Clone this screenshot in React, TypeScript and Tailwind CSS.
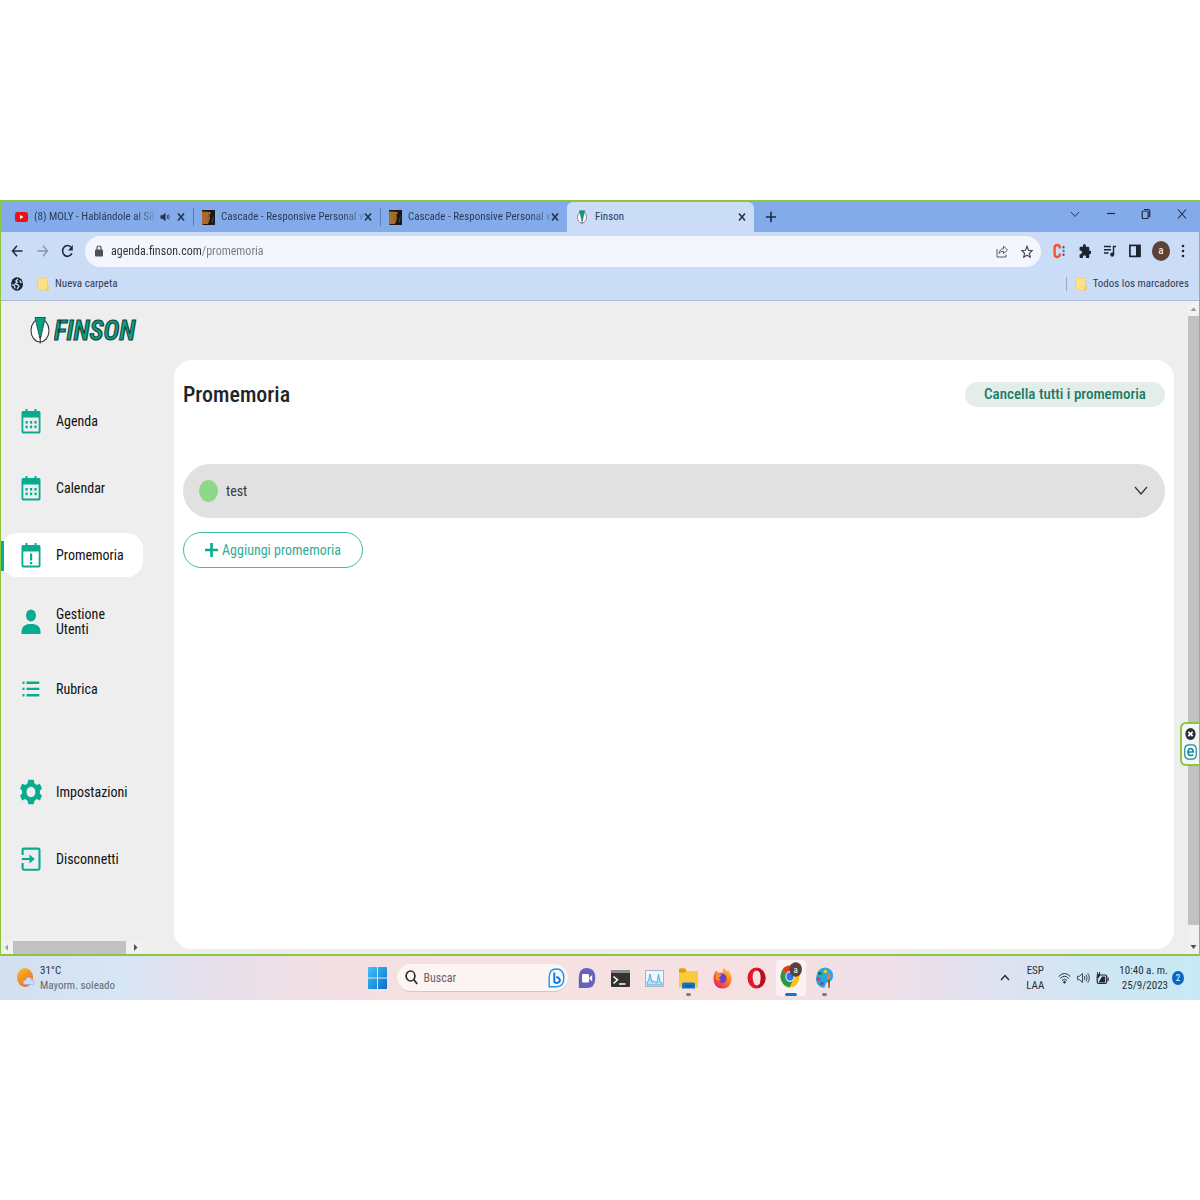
import type { ReactNode } from "react";

const GREEN = "#06ab90";

function CalendarIcon({ alert = false }: { alert?: boolean }) {
  return (
    <svg className="h-[26px] w-5 shrink-0" viewBox="0 0 20 26" aria-hidden="true">
      <rect x="4.500" y="1" width="2" height="5" fill={GREEN} />
      <rect x="13.500" y="1" width="2" height="5" fill={GREEN} />
      <path fillRule="evenodd" fill={GREEN} d="M2 3h16q1.500 0 1.500 2v18.500q0 2-1.500 2H2q-1.500 0-1.500-2V5Q.5 3 2 3zM2.300 9.500V23.600h15.400V9.500z" />
      {alert ? (
        <g fill={GREEN}>
          <rect x="9" y="11.500" width="2.200" height="7" />
          <rect x="9" y="20" width="2.200" height="2.300" />
        </g>
      ) : (
        <g fill={GREEN}>
          <rect x="4.500" y="13" width="2.200" height="2.600" />
          <rect x="9" y="13" width="2.200" height="2.600" />
          <rect x="13.400" y="13" width="2.200" height="2.600" />
          <rect x="4.500" y="17.600" width="2.200" height="2.600" />
          <rect x="9" y="17.600" width="2.200" height="2.600" />
          <rect x="13.400" y="17.600" width="2.200" height="2.600" />
        </g>
      )}
    </svg>
  );
}

const UserIcon = () => (
  <svg className="h-[26px] w-5 shrink-0" viewBox="0 0 20 26" fill={GREEN} aria-hidden="true">
    <ellipse cx="10" cy="6.500" rx="5" ry="6" />
    <path d="M.5 25v-2C.5 17.500 4 15 10 15s9.500 2.500 9.500 8v2z" />
  </svg>
);

const ListIcon = () => (
  <svg className="h-[26px] w-5 shrink-0" viewBox="0 0 20 26" fill={GREEN} aria-hidden="true">
    <path d="M1.500 5.500h2v2.400h-2zM5.500 5.500h12.800v2.400H5.500zM1.500 11.700h2v2.400h-2zM5.500 11.700h12.800v2.400H5.500zM1.500 18h2v2.400h-2zM5.500 18h12.800v2.400H5.500z" />
  </svg>
);

const GearIcon = () => (
  <svg className="-mx-px h-[26px] w-[22px] shrink-0" viewBox="0 0 22 26" aria-hidden="true">
    <path
      fillRule="evenodd"
      fill={GREEN}
      d="M8.300.8h5.400l.8 3.700 2.300 1.600 3.100-1.300 2 4.700-2 2.300v2.600l2 2.300-2 4.700-3.100-1.300-2.300 1.600-.8 3.600H8.300l-.8-3.600-2.300-1.600-3.100 1.300-2-4.700 2-2.300v-2.600l-2-2.300 2-4.700 3.100 1.300 2.300-1.600zM11 7.800c-2.500 0-4.400 2.300-4.400 5.200s1.900 5.200 4.400 5.200 4.400-2.300 4.400-5.200-1.900-5.200-4.400-5.200z"
    />
  </svg>
);

const ExitIcon = () => (
  <svg className="h-[26px] w-5 shrink-0" viewBox="0 0 20 26" fill="none" stroke={GREEN} strokeWidth="2.100" aria-hidden="true">
    <path d="M1.600 9V4q0-1.400 1.200-1.400h14.500q1.200 0 1.200 1.400v18.300q0 1.400-1.200 1.400H2.800q-1.200 0-1.200-1.400V17" />
    <path d="M.8 13h11" />
    <path d="M8.500 8.600 13.800 13l-5.300 4.400z" fill={GREEN} stroke="none" />
  </svg>
);

function FinsonMark({ className }: { className: string }) {
  return (
    <svg className={className} viewBox="0 0 20 28" aria-hidden="true">
      <ellipse cx="10" cy="14.500" rx="9" ry="11.500" fill="#fff" stroke="#3a3a3a" strokeWidth="1.100" />
      <path d="M5 1.500h10.500l-1 3.500L10.600 22H9.800L5.800 5z" fill="#04a183" stroke="#1e4f45" strokeWidth=".9" />
      <path d="M10.200 20v7.500" stroke="#222" strokeWidth="1" />
    </svg>
  );
}

const CloseIcon = () => (
  <svg className="h-2.5 w-2" viewBox="0 0 8 10" stroke="#25324a" strokeWidth="1.600" aria-hidden="true">
    <path d="m1 1.500 6 7M7 1.500l-6 7" />
  </svg>
);

const Folder = () => (
  <svg className="h-3.5 w-3 shrink-0" viewBox="0 0 12 14" aria-hidden="true">
    <path d="M1 1h8.500q1 0 1 1v6l1 1v4H2q-1.500 0-1.500-1.500V1z" fill="#ffe08a" stroke="#f0c95b" strokeWidth=".7" />
    <path d="M9 9.500h2.500V13H9z" fill="#f5cd5c" />
  </svg>
);

const CascadeIcon = () => (
  <svg className="h-[15px] w-[13px] shrink-0" viewBox="0 0 13 15" aria-hidden="true">
    <path fill="#1b1714" d="M0 0h13v15H0z" />
    <path fill="#a86d2c" d="M0 1.500 8.500 2v2l-1 1 .5 4-2 5H1.500L0 15z" />
    <path d="M6 4.500h2M5.500 7h2M5 9.500h2" stroke="#6b4018" strokeWidth=".8" />
    <path fill="#45474b" d="m9.500 12 2-7v4l-1 4z" />
  </svg>
);

function Tab({ icon, title, sound = false, wide = false }: { icon: ReactNode; title: string; sound?: boolean; wide?: boolean }) {
  return (
    <div className={`flex shrink-0 items-center ${wide ? "w-[192px] pl-3.5" : "w-[186px] pl-2"}`}>
      <button className="flex min-w-0 flex-1 items-center gap-1.5 text-left">
        {icon}
        <span className="whitespace-nowrap [mask-image:linear-gradient(to_right,black_85%,transparent_105%)]">{title}</span>
        {sound && (
          <svg className="ml-auto h-2.5 w-2.5 shrink-0" viewBox="0 0 10 10" fill="#25324a" aria-hidden="true">
            <path d="M.5 3.300h2L5.500.8v8.400l-3-2.500h-2z" />
            <path d="M7 3q1.200 2 0 4M8.500 2.500q1.600 2.500 0 5" fill="none" stroke="#25324a" strokeWidth=".8" />
          </svg>
        )}
      </button>
      <button className={`mr-1 flex h-4 w-4 items-center justify-center ${sound ? "ml-1.5" : ""}`} aria-label="Chiudi scheda"><CloseIcon /></button>
    </div>
  );
}

function TabStrip() {
  return (
    <div className="flex h-[30px] items-stretch bg-[#84abe9] text-[11px] text-[#2b3b57]">
      <Tab
        wide
        sound
        title="(8) MOLY - Hablándole al Sil"
        icon={
          <svg className="h-2.5 w-[13px] shrink-0" viewBox="0 0 13 10" aria-hidden="true">
            <rect width="13" height="10" rx="2.500" fill="#f20d1b" />
            <path d="m5 3 3.500 2L5 7z" fill="#fff" />
          </svg>
        }
      />
      <div className="my-1.5 w-px bg-[#5a7bb3]" />
      <Tab title="Cascade - Responsive Personal v" icon={<CascadeIcon />} />
      <div className="my-1.5 w-px bg-[#5a7bb3]" />
      <Tab title="Cascade - Responsive Personal v" icon={<CascadeIcon />} />
      <div className="flex w-[187px] items-center rounded-t-md bg-[#cbdcf6] pl-2.5">
        <button className="flex flex-1 items-center gap-2 text-left">
          <FinsonMark className="h-[14px] w-2.5" />
          Finson
        </button>
        <button className="mr-1 flex h-4 w-4 items-center justify-center" aria-label="Chiudi scheda"><CloseIcon /></button>
      </div>
      <button className="ml-3 flex items-center" aria-label="Nuova scheda">
        <svg className="h-3 w-2.5" viewBox="0 0 10 12" stroke="#1d2a42" strokeWidth="1.600" aria-hidden="true"><path d="M5 .8v10.400M0 6h10" /></svg>
      </button>
      <div className="ml-auto flex w-[129px] items-center justify-between pr-3 pb-1.5">
        <button aria-label="Cerca schede"><svg className="h-3 w-2.5" viewBox="0 0 10 12" fill="none" stroke="#24385f" aria-hidden="true"><path d="m1 4 4 4.500L9 4" /></svg></button>
        <button aria-label="Riduci"><svg className="h-3 w-2.5" viewBox="0 0 10 12" stroke="#1d2a42" strokeWidth="1.200" aria-hidden="true"><path d="M1 5.500h8" /></svg></button>
        <button aria-label="Ripristina"><svg className="h-3 w-2.5" viewBox="0 0 10 12" fill="none" stroke="#1d2a42" strokeWidth="1.200" aria-hidden="true"><rect x="1.200" y="3" width="6" height="7.500" rx="1" /><path d="M3 1.500h4.300q1.500 0 1.500 1.500v6" /></svg></button>
        <button aria-label="Chiudi"><svg className="h-3 w-2.5" viewBox="0 0 10 12" stroke="#1d2a42" strokeWidth="1.100" aria-hidden="true"><path d="m1 1.500 8 9M9 1.500l-8 9" /></svg></button>
      </div>
    </div>
  );
}

function Toolbar() {
  return (
    <div className="flex h-9 items-center bg-[#cbdcf6] pt-0.5 pr-3.5 pl-2.5">
      <button aria-label="Indietro"><svg className="h-3.5 w-3" viewBox="0 0 12 14" fill="none" stroke="#202a3b" strokeWidth="1.500" aria-hidden="true"><path d="M11.500 7H1.500M6 1.800 1.500 7 6 12.200" /></svg></button>
      <button className="ml-3.5" aria-label="Avanti"><svg className="h-3.5 w-3" viewBox="0 0 12 14" fill="none" stroke="#8392ab" strokeWidth="1.300" aria-hidden="true"><path d="M.5 7h10M6 1.800 10.500 7 6 12.200" /></svg></button>
      <button className="ml-3" aria-label="Ricarica"><svg className="h-3.5 w-[13px]" viewBox="0 0 13 14" fill="none" stroke="#202a3b" strokeWidth="1.600" aria-hidden="true"><path d="M10.800 9.200A4.800 5.400 0 1 1 10 3.300" /><path d="M11.800 1v5.500H7z" fill="#202a3b" stroke="none" /></svg></button>
      <label className="ml-[11px] flex h-[31px] flex-1 items-center rounded-full bg-[#f3f7fd] pr-2 pl-2.5">
        <svg className="mr-2 h-3 w-2" viewBox="0 0 8 12" aria-hidden="true"><rect y="4.500" width="8" height="7" rx="1" fill="#4c525c" /><path d="M2 5V3q0-2 2-2t2 2v2" fill="none" stroke="#4c525c" strokeWidth="1.200" /></svg>
        <input
          aria-label="Indirizzo"
          defaultValue="agenda.finson.com/promemoria"
          className="min-w-0 flex-1 bg-[linear-gradient(to_right,#2b3038_91px,#737a86_91px)] bg-clip-text text-[12px] text-transparent outline-none"
        />
        <button aria-label="Condividi"><svg className="h-3.5 w-3" viewBox="0 0 12 14" fill="none" stroke="#565c66" aria-hidden="true"><path d="M1 5v8h9v-2.500M3 9.500q.5-4.500 4.500-4.800V2L11.500 6 7.500 9.500V7.300Q4.500 7 3 9.500z" /></svg></button>
        <button className="ml-[13px]" aria-label="Aggiungi ai preferiti"><svg className="h-[13px] w-3" viewBox="0 0 12 13" fill="none" stroke="#3c424d" strokeWidth="1.100" aria-hidden="true"><path d="m6 1.300 1.500 3.900 3.700.3-2.800 2.800.9 4L6 10.100l-3.300 2.200.9-4L.8 5.500l3.700-.3z" /></svg></button>
      </label>
      <div className="ml-3 flex items-center gap-[13px]">
        <button aria-label="Estensione C"><svg className="h-4 w-[13px]" viewBox="0 0 13 16" aria-hidden="true"><path d="M6.800 5.500V4.300Q6.500 2 4.300 2 1.600 2 1.600 5v6q0 3 2.700 3 2.200 0 2.500-2.300v-1.200" fill="none" stroke="#f4512c" strokeWidth="2.300" /><path d="M9.500 3h2v2.300h-2z" fill="#4c5768" /><path d="M9.500 6.800h2v2.300h-2z" fill="#2188e6" /><path d="M9.500 10.600h2v2.300h-2z" fill="#4c5768" /></svg></button>
        <button aria-label="Estensioni"><svg className="h-3.5 w-3" viewBox="1 1 21 21" preserveAspectRatio="none" fill="#1c2431" aria-hidden="true"><path d="M20.500 11H19V7c0-1.100-.9-2-2-2h-4V3.500a2.500 2.500 0 0 0-5 0V5H4c-1.100 0-2 .9-2 2v3.800h1.500a2.700 2.700 0 0 1 0 5.400H2V20c0 1.100.9 2 2 2h3.800v-1.500a2.700 2.700 0 0 1 5.400 0V22H17c1.100 0 2-.9 2-2v-4h1.500a2.500 2.500 0 0 0 0-5z" /></svg></button>
        <button aria-label="Controlli multimediali"><svg className="h-3 w-3" viewBox="0 0 12 12" stroke="#1c2431" strokeWidth="1.400" fill="none" aria-hidden="true"><path d="M0 1.500h7M0 4.800h7M0 8h4.500M9.500 9.500V1.500H12" /><ellipse cx="8.200" cy="9.600" rx="1.300" ry="1.500" fill="#1c2431" /></svg></button>
        <button aria-label="Pannello laterale"><svg className="h-3.5 w-3" viewBox="0 0 12 14" aria-hidden="true"><rect x=".9" y="1.400" width="10" height="11" fill="none" stroke="#1c2431" strokeWidth="1.700" /><path d="M7 1h4.500v12H7z" fill="#1c2431" /></svg></button>
        <button className="-mx-0.5 flex h-5 w-[18px] items-center justify-center rounded-[50%] bg-[#5d4037] text-[11px] text-white">a</button>
        <button aria-label="Menu"><svg className="h-3.5 w-1" viewBox="0 0 4 14" fill="#1c2431" aria-hidden="true"><circle cx="2" cy="2" r="1.300" /><circle cx="2" cy="7" r="1.300" /><circle cx="2" cy="12" r="1.300" /></svg></button>
      </div>
    </div>
  );
}

function BookmarkBar() {
  return (
    <div className="flex h-[33px] items-center border-b border-[#aebbd6] bg-[#cbdcf6] pr-2.5 pl-2.5 text-[11px] text-[#2e3b50]">
      <button aria-label="Sito"><svg className="h-3.5 w-3" viewBox="0 0 12 14" aria-hidden="true"><ellipse cx="6" cy="7" rx="6" ry="6.800" fill="#1c2431" /><path d="M7 2 4.800 4l1.500 1.300L4 7l3 .8 1 1.700L6 12M1 7.500 3.500 9l.5 2.500M8.500 3.500 10.500 6" fill="none" stroke="#cbdcf6" strokeWidth="1.300" /></svg></button>
      <button className="ml-3.5 flex items-center gap-1.5"><Folder />Nueva carpeta</button>
      <div className="ml-auto h-3.5 w-px bg-[#9aa9c5]" />
      <button className="ml-2 flex items-center gap-1.5"><Folder />Todos los marcadores</button>
    </div>
  );
}

function NavItem({ icon, label, active = false }: { icon: ReactNode; label: string; active?: boolean }) {
  return (
    <a href="#" aria-current={active ? "page" : undefined} className={`relative flex h-11 items-center gap-[15px] pl-5 text-[14px] leading-[15px] text-[#111] ${active ? "rounded-2xl bg-white" : ""}`}>
      {active && <span className="absolute top-2 left-0 h-[30px] w-[3px] bg-[#06ab90]" />}
      {icon}
      <span className="w-20">{label}</span>
    </a>
  );
}

function Sidebar() {
  return (
    <aside className="flex w-[173px] shrink-0 flex-col">
      <div className="flex h-[58px] items-center gap-1 pl-[29px]">
        <FinsonMark className="h-7 w-5" />
        <svg className="h-7 w-[84px]" viewBox="0 0 84 28" role="img" aria-label="Finson">
          <text x="0" y="24" fontFamily="Roboto Condensed, Roboto, sans-serif" fontSize="27" fontWeight="600" fontStyle="italic" fill="#05a386" stroke="#173f38" strokeWidth="1.100">FINSON</text>
        </svg>
      </div>
      <nav className="mt-10 mr-[31px] flex flex-1 flex-col gap-[23px]">
        <NavItem icon={<CalendarIcon />} label="Agenda" />
        <NavItem icon={<CalendarIcon />} label="Calendar" />
        <NavItem icon={<CalendarIcon alert />} label="Promemoria" active />
        <NavItem icon={<UserIcon />} label="Gestione Utenti" />
        <NavItem icon={<ListIcon />} label="Rubrica" />
        <div className="mt-9 flex flex-col gap-[23px]">
          <NavItem icon={<GearIcon />} label="Impostazioni" />
          <NavItem icon={<ExitIcon />} label="Disconnetti" />
        </div>
      </nav>
      <div className="mt-[60px] mr-[31px] flex h-[13px] items-stretch bg-[#f1f1f1]">
        <svg className="w-3" viewBox="0 0 12 13" aria-hidden="true"><path d="M7 3.500v6l-3-3z" fill="#9b9b9b" /></svg>
        <div className="w-[113px] bg-[#c1c1c1]" />
        <svg className="ml-[3px] w-3" viewBox="0 0 12 13" aria-hidden="true"><path d="M5 3v7l3.500-3.500z" fill="#505050" /></svg>
      </div>
    </aside>
  );
}

function Reminders() {
  return (
    <main className="mt-[59px] mr-3.5 mb-[5px] flex-1 rounded-[18px] bg-white px-[9px] pt-[22px]">
      <div className="flex items-start justify-between">
        <h1 className="text-[22px] leading-[26px] font-medium text-[#212529]">Promemoria</h1>
        <button className="h-[25px] w-[200px] rounded-full bg-[#e3eeeb] text-[15px] leading-[25px] font-medium text-[#1b7a64]">Cancella tutti i promemoria</button>
      </div>
      <button className="mt-[56px] flex h-[54px] w-full items-center rounded-full bg-[#e1e1e1] px-4 text-[14px] text-[#3a3a3a]" aria-expanded="false">
        <span className="mr-2 h-[22px] w-[19px] rounded-[50%] bg-[#8ed888]" />
        test
        <svg className="ml-auto h-3 w-4" viewBox="0 0 16 12" fill="none" stroke="#333" strokeWidth="1.200" aria-hidden="true"><path d="m2 2 6 7 6-7" /></svg>
      </button>
      <button className="mt-3.5 flex h-9 w-[180px] items-center justify-center gap-1 rounded-full border border-[#3dbba4] text-[14px] text-[#2fae95]">
        <svg className="h-3.5 w-[13px]" viewBox="0 0 13 14" stroke={GREEN} strokeWidth="2.600" aria-hidden="true"><path d="M6.500 0v14M0 7h13" /></svg>
        Aggiungi promemoria
      </button>
    </main>
  );
}

function ScrollRail() {
  return (
    <div className="relative flex w-[11px] shrink-0 flex-col bg-[#f1f1f1]">
      <svg className="h-[15px] w-full" viewBox="0 0 11 15" aria-hidden="true"><path d="M2.500 10h6l-3-3.500z" fill="#9b9b9b" /></svg>
      <div className="flex-1 bg-[#c1c1c1]" />
      <svg className="mt-3 h-[17px] w-full" viewBox="0 0 11 17" aria-hidden="true"><path d="M2.500 8h6l-3 4z" fill="#505050" /></svg>
      <div className="absolute top-[421px] right-0 flex h-11 w-[19px] flex-col items-center justify-center gap-1 rounded-l-md border-2 border-r-0 border-[#8cc63f] bg-[#f5f5f5]">
        <svg className="h-3 w-[11px] shrink-0" viewBox="0 0 12 14" aria-hidden="true"><ellipse cx="6" cy="7" rx="6" ry="7" fill="#26303a" /><path d="m3.500 4.500 5 5M8.500 4.500l-5 5" stroke="#fff" strokeWidth="2" /></svg>
        <svg className="h-4 w-[13px] shrink-0" viewBox="0 0 13 16" fill="none" stroke="#118a9a" aria-hidden="true"><rect x=".8" y=".8" width="11.400" height="14.400" rx="4" strokeWidth="1.200" fill="#fff" /><path d="M4 8h5.300Q9 4.500 6.600 4.500T4 8q0 3.500 2.800 3.500Q8.300 11.500 9.300 10.500" strokeWidth="1.600" /></svg>
      </div>
    </div>
  );
}

function TaskButton({ label, children, running = false, active = false }: { label: string; children: ReactNode; running?: boolean; active?: boolean }) {
  return (
    <button aria-label={label} className={`relative flex h-9 w-[30px] items-center justify-center rounded ${active ? "bg-[#fbf2f3]" : ""}`}>
      {children}
      {running && <span className="absolute bottom-0 h-[3px] w-[5px] rounded-full bg-[#85797c]" />}
      {active && <span className="absolute bottom-0 h-[3px] w-3 rounded-full bg-[#1677cf]" />}
    </button>
  );
}

function Taskbar() {
  return (
    <footer className="grid h-[44px] grid-cols-[1fr_auto_1fr] items-center bg-[linear-gradient(90deg,#d3dff0_0%,#d7e6f5_10%,#e6e0ec_17%,#f3dfe4_27%,#f6e2df_38%,#f5e1e2_62%,#efdfe8_74%,#dfe2f1_83%,#cde6f4_92%,#c7e9f5_100%)] text-[11px] text-[#2a2f36]">
      <button className="flex items-center gap-[5px] pl-4 text-left leading-[15px]">
        <svg className="h-[22px] w-[19px]" viewBox="0 0 19 22" aria-hidden="true">
          <defs><linearGradient id="sun" x2=".6" y2="1"><stop stopColor="#f8c22d" /><stop offset="1" stopColor="#ef6c17" /></linearGradient></defs>
          <ellipse cx="9" cy="10.500" rx="8" ry="9.500" fill="url(#sun)" />
          <path d="M9.500 17.500q-2.500 0-2.500-2 0-2.200 2.500-2.300Q10.300 10 13 10.200q2.500.2 3 3 2.500.3 2.500 2.300 0 2-2.500 2z" fill="#c9dcfa" stroke="#90b3ea" strokeWidth=".6" />
        </svg>
        <span>31°C<br /><span className="text-[#626a75]">Mayorm. soleado</span></span>
      </button>
      <div className="flex items-center pl-[7px]">
        <button aria-label="Inicio" className="mr-2.5">
          <svg className="h-[22px] w-[19px]" viewBox="0 0 19 22" aria-hidden="true">
            <defs><linearGradient id="win" x2="1" y2="1"><stop stopColor="#41c5f7" /><stop offset="1" stopColor="#0a6ccf" /></linearGradient></defs>
            <path fill="url(#win)" d="M.5 0h8.500v10.500H0V.5zM10 0h8.500l.5.500v10h-9zM0 11.500h9V22H.5L0 21.500zM10 11.500h9v10l-.5.500H10z" />
          </svg>
        </button>
        <label className="mr-1 flex h-7 w-[171px] items-center rounded-full border-b border-[#d6c5c5] bg-[#fcf5f4] pr-[3px] pl-2">
          <svg className="mr-1.5 h-[15px] w-[13px]" viewBox="0 0 13 15" fill="none" stroke="#2c2c2c" strokeWidth="1.700" aria-hidden="true"><ellipse cx="5.500" cy="6" rx="4.400" ry="5" /><path d="m8.700 9.600 3.500 4.500" /></svg>
          <input aria-label="Buscar" placeholder="Buscar" className="min-w-0 flex-1 text-[12px] outline-none placeholder:text-[#6a6463]" />
          <svg className="h-5 w-[17px]" viewBox="0 0 17 20" fill="none" aria-hidden="true"><path d="M1.200 18.700V9.500Q1.200 1 8.500 1t7.300 9q0 8.700-7.300 8.700z" stroke="#2292e4" strokeWidth="1.400" fill="#f4fbff" /><path d="M6.300 4.500v9.300q1.500 1.800 4 .7 2-1 1.500-3-.8-2-3.500-2.500" stroke="#1470dc" strokeWidth="1.900" /></svg>
        </label>
        <div className="flex items-center gap-1">
          <TaskButton label="Chat">
            <svg className="h-[22px] w-[18px]" viewBox="0 0 18 22" aria-hidden="true"><path d="M.8 21V10.500Q.8 1 9 1t8.300 10Q17.300 21 9 21z" fill="#6560c0" /><rect x="4" y="7" width="7" height="8.500" rx="1" fill="#fff" /><path d="m11.500 10.500 2.700-2.500v6.500l-2.700-2.500z" fill="#fff" /></svg>
          </TaskButton>
          <TaskButton label="Terminal">
            <svg className="h-[17px] w-[19px]" viewBox="0 0 19 17" aria-hidden="true"><rect width="19" height="17" rx="1" fill="#333" /><path d="M0 1q0-1 1-1h17q1 0 1 1v2H0z" fill="#8b8b8b" /><path d="m2.500 6.500 4 3.300-4 3.700M8 14h6.500" fill="none" stroke="#fff" strokeWidth="1.500" /></svg>
          </TaskButton>
          <TaskButton label="Monitor">
            <svg className="h-[17px] w-[19px]" viewBox="0 0 19 17" aria-hidden="true"><rect x=".5" y=".5" width="18" height="16" fill="#eff6fb" stroke="#a9b5be" /><path d="M2 15v-3l1.500-1L5 4l2 8 1.500-1 1.500 1 2 1 1.500-9 1.500 8 2 1v2z" fill="#b8e0f7" stroke="#55b0e4" strokeWidth="1" /></svg>
          </TaskButton>
          <TaskButton label="Explorador" running>
            <svg className="h-[21px] w-[19px]" viewBox="0 0 19 21" aria-hidden="true"><path d="M0 2q0-1.500 1-1.500h5L7.500 3H18q1 0 1 1v15.500H0z" fill="#fcc83c" /><path d="M0 2q0-1.500 1-1.500h5L7.500 3 6 4.500H0z" fill="#dd9b13" /><path d="M3 20.500V16q0-1.500 1.500-1.500h10q1.500 0 1.500 1.500v4.500z" fill="#1573c5" /><path d="M6 18h7" stroke="#0b4d90" strokeWidth="1.200" /></svg>
          </TaskButton>
          <TaskButton label="Firefox">
            <svg className="h-[22px] w-[19px]" viewBox="0 0 19 22" aria-hidden="true">
              <defs><linearGradient id="fox" x1="1" x2=".2" y2="1"><stop stopColor="#ffe13b" /><stop offset=".5" stopColor="#ff7a25" /><stop offset="1" stopColor="#ed1d68" /></linearGradient></defs>
              <path d="M11 .5q1 2.500 3 4l1-1.500q3.500 4 3.500 9Q18 21.500 9.500 21.500T.5 12.500Q.3 7 3.300 3.500L5 6q3-1 5-.5-.5-3 1-5z" fill="url(#fox)" />
              <ellipse cx="9.500" cy="11.500" rx="4" ry="4.700" fill="#6842cf" /><path d="M3 6q3 0 5.500 2.500L5.500 11 8 13q-3 2-5-1z" fill="#ff8d26" />
            </svg>
          </TaskButton>
          <TaskButton label="Opera">
            <svg className="h-[22px] w-[19px]" viewBox="0 0 19 22" aria-hidden="true"><path fillRule="evenodd" fill="#e3162b" d="M9.500.5a9 10.500 0 1 0 0 21 9 10.500 0 1 0 0-21zM10 3.500q3.800 0 3.800 7.500T10 18.500 5.700 11 10 3.500z" /><path d="M10 3.500q2.500-3 5 0 3.800 3 3.500 8-.3 5-3.500 7.500-3 2-5-.5 3.800 0 3.800-7.500T10 3.500z" fill="#b80f23" /></svg>
          </TaskButton>
          <TaskButton label="Chrome" active>
            <svg className="mb-1.5 h-[26px] w-[22px]" viewBox="0 0 22 26" aria-hidden="true">
              <ellipse cx="10" cy="14.500" rx="9.500" ry="11" fill="#fbc116" />
              <path d="M10 14.500 2 8.500Q4.500 3.500 10 3.500t8 5.500h-8z" fill="#e33b2e" />
              <path d="M2 8.500q-3 6 0 11.500 2.500 4.500 7.500 5.500L13.500 17 10 14.500z" fill="#229b4b" />
              <ellipse cx="10" cy="14.500" rx="4.600" ry="5.400" fill="#fff" /><ellipse cx="10" cy="14.500" rx="3.600" ry="4.300" fill="#2d75ea" />
              <ellipse cx="15.700" cy="7.500" rx="6.200" ry="7.300" fill="#57423c" />
              <text x="15.700" y="10.500" textAnchor="middle" fontSize="9" fill="#fff" fontFamily="Roboto Condensed, sans-serif">a</text>
            </svg>
          </TaskButton>
          <TaskButton label="Paint" running>
            <svg className="h-[22px] w-[19px]" viewBox="0 0 19 22" aria-hidden="true">
              <path d="M10.500.5Q18 1.500 18 9q0 5-4.500 6-3 .5-3 3-.3 3.500-3.500 2.500-6.500-2-6-9.500Q1.800.5 10.500.5z" fill="#28a6e3" />
              <circle cx="3.500" cy="12" r="1.900" fill="#c4462f" /><circle cx="5" cy="6.500" r="1.800" fill="#23753b" /><circle cx="10.500" cy="4.500" r="1.800" fill="#f4c820" /><circle cx="7" cy="16.500" r="1.700" fill="#76489d" />
              <path d="M12.600 7.500q1.200-2 2.600 0v5h-2.600z" fill="#d98b32" /><path d="M13 12.500h2l-.3 8q-.7 1.500-1.400 0z" fill="#8c5423" />
            </svg>
          </TaskButton>
        </div>
      </div>
      <div className="flex items-center justify-end pr-4 leading-[15px]">
        <button aria-label="Iconos ocultos"><svg className="h-2 w-2.5" viewBox="0 0 10 8" fill="none" stroke="#22272d" strokeWidth="1.300" aria-hidden="true"><path d="m1 6 4-4.500L9 6" /></svg></button>
        <button className="ml-4 text-center">ESP<br />LAA</button>
        <button className="ml-3.5 flex items-center gap-1.5" aria-label="Red, volumen y batería">
          <svg className="h-3 w-[13px]" viewBox="0 0 13 12" fill="none" stroke="#2c343b" aria-hidden="true"><path d="M.7 4.500q5.800-6 11.600 0M2.300 6.500q4.200-4.500 8.400 0M4 8.500q2.500-2.600 5 0" /><circle cx="6.500" cy="10.200" r=".9" fill="#2c343b" /></svg>
          <svg className="h-3 w-[13px]" viewBox="0 0 13 12" fill="none" stroke="#2c343b" strokeWidth=".9" aria-hidden="true"><path d="M.6 4.200h2L5.500 1.500v9L2.600 7.800h-2zM7.200 4q1.300 2 0 4M9 2.600q2.400 3.400 0 6.800M10.700 1.200q3.200 4.800 0 9.600" /></svg>
          <svg className="h-3.5 w-[13px]" viewBox="0 0 13 14" aria-hidden="true"><rect x="1.200" y="4" width="9.500" height="8.500" rx="1.500" fill="none" stroke="#22282e" strokeWidth="1.200" /><path d="M11.500 6.500h1.200V10h-1.200zM2.500 11.500 6 5.500h3.200v6zM.5 3.500h4l-2 4zM1.200 1h.9v3h-.9zM3 1h.9v3H3z" fill="#22282e" /></svg>
        </button>
        <button className="ml-2.5 text-right">10:40 a. m.<br />25/9/2023</button>
        <button className="ml-1 flex h-3.5 w-3 items-center justify-center rounded-[50%] bg-[#0a66c2] text-[9px] text-white">2</button>
      </div>
    </footer>
  );
}

export default function App() {
  return (
    <div className="bg-white py-[200px] font-['Roboto_Condensed','Roboto',sans-serif]">
      <div className="border-x border-t-2 border-b-2 border-[#8cc63f]">
        <TabStrip />
        <Toolbar />
        <BookmarkBar />
        <div className="flex items-stretch bg-[#eee]">
          <Sidebar />
          <Reminders />
          <ScrollRail />
        </div>
      </div>
      <Taskbar />
    </div>
  );
}
